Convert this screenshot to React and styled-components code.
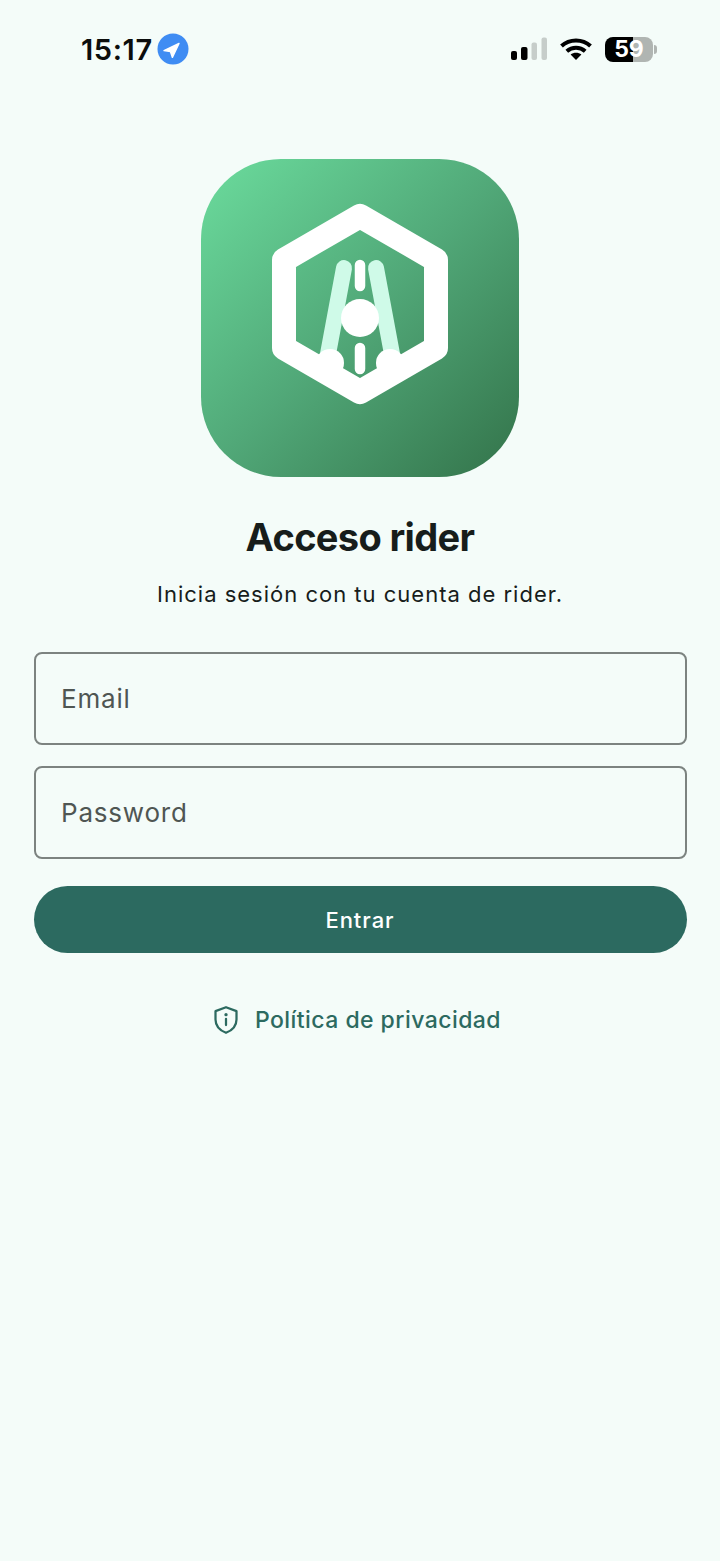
import React from 'react';
import styled, { createGlobalStyle } from 'styled-components';

const GlobalStyle = createGlobalStyle`
  html, body {
    margin: 0;
    padding: 0;
    background: #f4fcf9;
  }
`;

const LogoMark = () => (
  <LogoSvg viewBox="201 159 318 318">
    <defs>
      <linearGradient id="tile" x1="0" y1="0" x2="1" y2="1">
        <stop offset="0" stopColor="#6bdc9d" />
        <stop offset="0.5" stopColor="#51a878" />
        <stop offset="1" stopColor="#33734a" />
      </linearGradient>
    </defs>
    <rect x="201" y="159" width="318" height="318" rx="80" fill="url(#tile)" />
    <path d="M344 268 L328 354 M376 268 L392 354" stroke="#cffae8" strokeWidth="16" strokeLinecap="round" fill="none" />
    <path d="M360 216 L436 260 L436 348 L360 392 L284 348 L284 260 Z" stroke="#fff" strokeWidth="24" strokeLinejoin="round" fill="none" />
    <path d="M360 265 L360 286 M360 348 L360 369" stroke="#fff" strokeWidth="10.5" strokeLinecap="round" fill="none" />
    <circle cx="360" cy="318" r="19" fill="#fff" />
    <circle cx="330" cy="363" r="14" fill="#fff" />
    <circle cx="390" cy="363" r="14" fill="#fff" />
  </LogoSvg>
);

const LocationBadge = () => (
  <svg width="32" height="32" viewBox="0 0 32 32">
    <circle cx="16" cy="16" r="15.5" fill="#3f8cf3" />
    <path d="M22 10.5 L7 17.6 L13.4 18.6 L15.4 24.4 Z" fill="#fff" strokeLinejoin="round" stroke="#fff" strokeWidth="1.4" />
  </svg>
);

const SignalBars = () => (
  <svg width="37" height="24" viewBox="0 0 37 24">
    <rect x="1" y="14" width="6" height="9" rx="2" fill="#000" />
    <rect x="11" y="10" width="6.5" height="13" rx="2" fill="#000" />
    <rect x="21.5" y="5.5" width="5.5" height="17.5" rx="2" fill="#c6cdca" />
    <rect x="31.5" y="0.5" width="5.5" height="22.5" rx="2" fill="#c6cdca" />
  </svg>
);

const WifiGlyph = () => (
  <svg width="32" height="22" viewBox="0 0 32 22" fill="none" stroke="#000" strokeWidth="4">
    <path d="M1.5 8 C9.5 0.5 22.5 0.5 30.5 8" />
    <path d="M6.8 13.2 C12 8.5 20 8.5 25.2 13.2" />
    <path d="M16 22 L10.6 16.6 C13.6 14 18.4 14 21.4 16.6 Z" fill="#000" stroke="none" />
  </svg>
);

const ShieldInfo = () => (
  <svg width="30" height="30" viewBox="0 0 24 24" fill="none" stroke="#2c6a60" strokeWidth="1.8" strokeLinecap="round" strokeLinejoin="round">
    <path d="M12 1.8 L20.4 4.9 V11.5 C20.4 16.5 17 20.2 12 22.2 C7 20.2 3.6 16.5 3.6 11.5 V4.9 Z" />
    <path d="M12 11 V16" />
    <path d="M12 7.6 V7.7" strokeWidth="2.6" />
  </svg>
);

export default function App() {
  return (
    <Page>
      <GlobalStyle />
      <StatusBar>
        <Clock>
          <Time>15:17</Time>
          <LocationBadge />
        </Clock>
        <Indicators>
          <SignalBars />
          <WifiGlyph />
          <Battery>
            <BatteryBody>59</BatteryBody>
            <BatteryCap />
          </Battery>
        </Indicators>
      </StatusBar>

      <Content>
        <LogoMark />
        <Title>Acceso rider</Title>
        <Subtitle>Inicia sesión con tu cuenta de rider.</Subtitle>
        <Form>
          <Field>Email</Field>
          <Field>Password</Field>
          <SubmitButton type="button">Entrar</SubmitButton>
        </Form>
        <PrivacyLink>
          <ShieldInfo />
          Política de privacidad
        </PrivacyLink>
      </Content>
    </Page>
  );
}

const Page = styled.div`
  min-height: 1561px;
  background: #f4fcf9;
  font-family: 'Inter', 'Liberation Sans', sans-serif;
  display: flex;
  flex-direction: column;
`;

const StatusBar = styled.div`
  height: 98px;
  padding: 0 63px 0 81px;
  display: flex;
  align-items: center;
  justify-content: space-between;
`;

const Clock = styled.div`
  display: flex;
  align-items: center;
  gap: 4px;
`;

const Time = styled.span`
  font-size: 29px;
  font-weight: 600;
  letter-spacing: 0.6px;
  color: #0b0d0c;
`;

const Indicators = styled.div`
  display: flex;
  align-items: center;
  gap: 13px;
`;

const Battery = styled.div`
  display: flex;
  align-items: center;
  gap: 1px;
`;

const BatteryBody = styled.div`
  width: 48px;
  height: 25px;
  border-radius: 8px;
  background: linear-gradient(90deg, #000 0, #000 28px, #b0b5b2 28px, #b0b5b2 100%);
  color: #fff;
  font-size: 23px;
  font-weight: 700;
  line-height: 25px;
  text-align: center;
`;

const BatteryCap = styled.div`
  width: 3px;
  height: 9px;
  border-radius: 0 3px 3px 0;
  background: #b0b5b2;
`;

const Content = styled.main`
  padding: 61px 33.5px 0;
  display: flex;
  flex-direction: column;
  align-items: center;
`;

const LogoSvg = styled.svg`
  width: 318px;
  height: 318px;
  display: block;
`;

const Title = styled.h1`
  margin: 36px 0 0;
  font-size: 38px;
  line-height: 48px;
  font-weight: 700;
  letter-spacing: -0.65px;
  color: #171d1b;
`;

const Subtitle = styled.p`
  margin: 18px 0 0;
  font-size: 22px;
  line-height: 30px;
  letter-spacing: 1px;
  color: #171d1b;
`;

const Form = styled.form`
  align-self: stretch;
  margin-top: 43px;
  display: flex;
  flex-direction: column;
  gap: 21px;
`;

const Field = styled.div`
  height: 93px;
  box-sizing: border-box;
  border: 2px solid #7c8380;
  border-radius: 8px;
  padding: 0 25.5px;
  display: flex;
  align-items: center;
  font-size: 26px;
  letter-spacing: 0.8px;
  color: #4f5653;
`;

const SubmitButton = styled.button`
  height: 67px;
  margin-top: 6px;
  border: none;
  border-radius: 34px;
  background: #2c6a60;
  color: #fff;
  font-family: inherit;
  font-size: 22px;
  font-weight: 500;
  letter-spacing: 0.95px;
`;

const PrivacyLink = styled.a`
  margin-top: 52px;
  padding-right: 8px;
  display: flex;
  align-items: center;
  gap: 14px;
  font-size: 23px;
  font-weight: 500;
  line-height: 30px;
  letter-spacing: 0.45px;
  color: #2c6a60;
`;
